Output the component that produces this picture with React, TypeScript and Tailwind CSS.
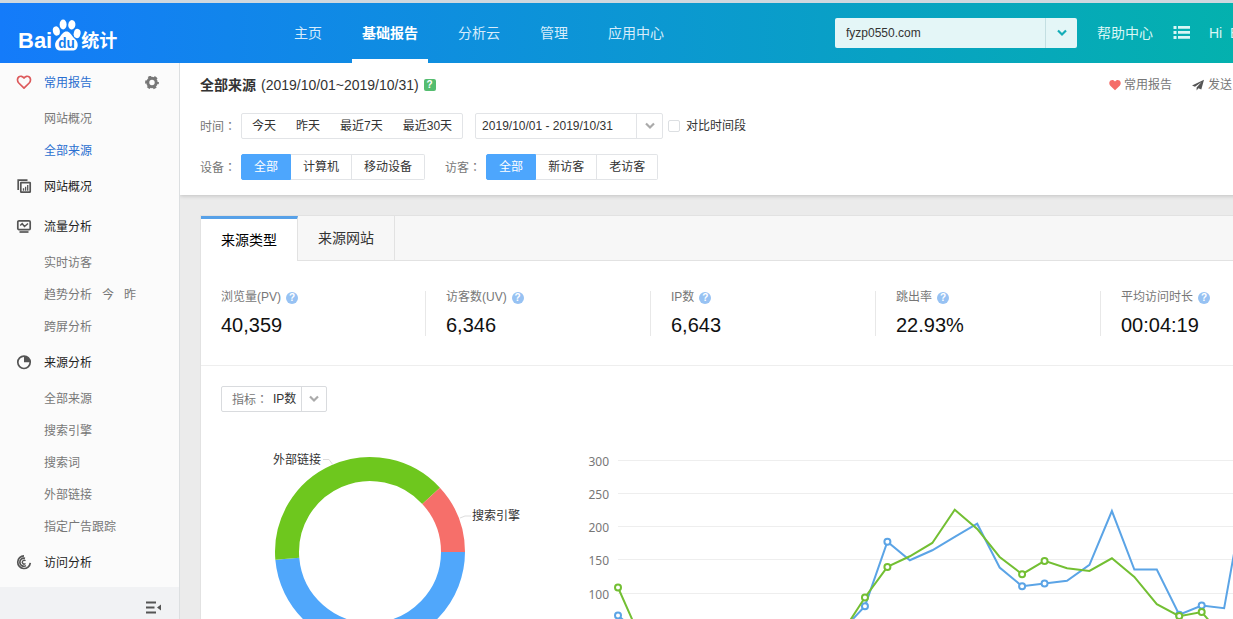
import { useState } from "react";
import type { ReactNode } from "react";
import clsx from "clsx";

interface MenuItem {
  name: string;
  active?: boolean;
  extra?: string[];
}

interface MenuGroup {
  name: string;
  icon: ReactNode;
  active?: boolean;
  items: MenuItem[];
}

const HeartIcon = () => (
  <svg width="16" height="16" viewBox="0 1 16 16" fill="none" stroke="#dd5a5c" strokeWidth="1.7" strokeLinejoin="round">
    <path d="M8 14.200 2.800 9C1 7.100 1.100 4.300 2.700 3c1.700-1.300 4-.8 5.300 1.100C9.300 2.200 11.600 1.700 13.300 3c1.600 1.300 1.700 4.100-.1 6Z" />
  </svg>
);

const OverviewIcon = () => (
  <svg width="16" height="16" viewBox="0 1 16 16" fill="none" stroke="#555" strokeWidth="1.7">
    <path d="M2.200 12V2.200H11.500" />
    <rect x="4.800" y="4.600" width="9.400" height="9.600" rx=".5" />
    <path d="M7.500 12.700V10.200M9.600 12.700V8.700M11.700 12.700V7" strokeWidth="1.300" />
  </svg>
);

const FlowIcon = () => (
  <svg width="16" height="16" viewBox="0 1 16 16" fill="none" stroke="#555" strokeWidth="1.7">
    <rect x="1.800" y="2.800" width="12.400" height="8.800" rx="1.200" />
    <path d="m4.200 7.500 2-1.800 2.300 2.800 3.500-3" strokeWidth="1.500" />
    <path d="M3.500 14h9" />
  </svg>
);

const SourceIcon = () => (
  <svg width="16" height="16" viewBox="0 1 16 16" fill="none">
    <circle cx="8" cy="8.300" r="6.200" stroke="#555" strokeWidth="1.700" />
    <path d="M8 8.300V2.100A6.200 6.200 0 0 1 14.200 8.300Z" fill="#555" />
  </svg>
);

const VisitIcon = () => (
  <svg width="16" height="16" viewBox="0 1 16 16" fill="none" stroke="#555" strokeWidth="1.700">
    <path d="M8 1.900a6.300 6.300 0 1 0 6.300 7" />
    <path d="M9 4.400a4 4 0 1 0 1 7.200" />
    <path d="M9.500 6.800a1.900 1.900 0 1 0 0 2.800" strokeWidth="1.400" />
  </svg>
);

const menu: MenuGroup[] = [
  { name: "常用报告", icon: <HeartIcon />, active: true, items: [{ name: "网站概况" }, { name: "全部来源", active: true }] },
  { name: "网站概况", icon: <OverviewIcon />, items: [] },
  { name: "流量分析", icon: <FlowIcon />, items: [{ name: "实时访客" }, { name: "趋势分析", extra: ["今", "昨"] }, { name: "跨屏分析" }] },
  {
    name: "来源分析",
    icon: <SourceIcon />,
    items: [{ name: "全部来源" }, { name: "搜索引擎" }, { name: "搜索词" }, { name: "外部链接" }, { name: "指定广告跟踪" }],
  },
  { name: "访问分析", icon: <VisitIcon />, items: [] },
];

const navItems = ["主页", "基础报告", "分析云", "管理", "应用中心"];

const metrics = [
  { name: "浏览量(PV)", value: "40,359" },
  { name: "访客数(UV)", value: "6,346" },
  { name: "IP数", value: "6,643" },
  { name: "跳出率", value: "22.93%" },
  { name: "平均访问时长", value: "00:04:19" },
];

// One value per day of the month
const blueData = [67, 38, 30, 28, 25, 26, 30, 28, 32, 35, 45, 81, 178, 150, 165, 185, 205, 139, 111, 115, 119, 143, 224, 136, 136, 68, 82, 78, 265, 180, 150];
const greenData = [109, 33, 28, 25, 24, 26, 28, 30, 30, 34, 42, 94, 140, 156, 176, 226, 197, 155, 129, 149, 138, 134, 153, 125, 84, 66, 72, 33, 60, 90, 80];
const markedDays = [0, 11, 12, 18, 19, 25, 26];

const chartX = (i: number) => 48 + i * 22.45;
const chartY = (v: number) => 248 - v * 0.665;

const Chevron = ({ color }: { color: string }) => (
  <svg width="10" height="8" viewBox="0 0 10 8" fill="none" stroke={color} strokeWidth="2.200">
    <path d="m1 1.500 4 4 4-4" />
  </svg>
);

// The TC face centres the full-width colon in its cell
const Colon = () => <span className="font-['Noto_Sans_CJK_TC',sans-serif]">：</span>;

const HelpDot = ({ name }: { name: string }) => (
  <button
    aria-label={`${name} 说明`}
    className="mt-px flex size-3 items-center justify-center rounded-full bg-[#97c2f3] text-[10px] leading-3 font-bold text-white"
  >
    ?
  </button>
);

function Logo() {
  return (
    <a href="#" className="flex w-[266px] items-end pt-1 pl-[18px] text-white">
      <span className="text-[22px] leading-6 font-bold">Bai</span>
      <svg width="29" height="34" viewBox="0 0 30 34" preserveAspectRatio="none" fill="#fff" className="mb-[2px]">
        <ellipse cx="4.500" cy="14" rx="3.600" ry="4.700" transform="rotate(-12 4.500 14)" />
        <ellipse cx="11.500" cy="7.500" rx="3.600" ry="4.900" />
        <ellipse cx="20.500" cy="7.800" rx="3.700" ry="4.700" transform="rotate(10 20.500 7.800)" />
        <ellipse cx="26" cy="16.500" rx="3.500" ry="4.700" transform="rotate(12 26 16.500)" />
        <path d="M15 14.500c3.200 0 4.500 2.800 6.600 5.200 2.200 2.400 5 4.300 5 8.200 0 3.500-2.200 5.700-5.400 5.700H8.800c-3.200 0-5.600-2.200-5.600-5.700 0-3.800 3-5.800 5.100-8.200 2-2.400 3.500-5.200 6.700-5.200Z" />
        <text x="15" y="31" textAnchor="middle" fontSize="14" fontWeight="bold" fill="#127dee">du</text>
      </svg>
      <span className="text-[18px] leading-6 font-bold">统计</span>
    </a>
  );
}

function Header() {
  return (
    <header className="flex h-[63px] shrink-0 items-stretch border-t-3 border-[#cfd8df] bg-linear-to-r/srgb from-[#147bfa] to-[#02b6a7] text-sm">
      <div className="flex items-center">
        <Logo />
      </div>
      <nav className="ml-[18px] flex gap-5">
        {navItems.map(item => (
          <a
            key={item}
            href="#"
            className={clsx(
              "flex items-center border-y-4 border-transparent px-[10px]",
              item === "基础报告" ? "border-b-white font-bold text-white" : "text-[#d6ecfb]"
            )}
          >
            {item}
          </a>
        ))}
      </nav>
      <div className="ml-[161px] flex items-center text-[#d9f6f5]">
        <div className="relative flex h-[30px] w-[242px] overflow-hidden rounded-xs bg-[#e4f6f7] text-xs text-[#333]">
          <select aria-label="网站" className="w-full appearance-none pl-[11px] outline-none">
            <option>fyzp0550.com</option>
          </select>
          <span className="pointer-events-none absolute inset-y-0 right-0 flex w-8 items-center justify-center border-l border-[#c3dfe2]">
            <Chevron color="#13adb8" />
          </span>
        </div>
        <a href="#" className="ml-5">帮助中心</a>
        <button aria-label="列表" className="ml-5">
          <svg width="18" height="16" viewBox="0 0 18 16" fill="currentColor">
            <path d="M.5 1h3v3h-3zM5 1h12v2.800H5zM.5 6h3v3h-3zM5 6h12v2.800H5zM.5 11h3v3h-3zM5 11h12v2.800H5z" />
          </svg>
        </button>
        <span className="ml-[18px] whitespace-pre">Hi  B</span>
      </div>
    </header>
  );
}

function Sidebar() {
  return (
    <aside className="flex w-[180px] shrink-0 flex-col border-r border-[#dcdfe1] bg-[#fbfbfb] text-xs">
      <nav className="min-h-0 flex-1 overflow-hidden">
        {menu.map((group, i) => (
          <div key={i}>
            <div className="flex h-10 items-center pr-5 pl-4">
              {group.icon}
              <a href="#" className={clsx("ml-3", group.active ? "text-[#2a6fd0]" : "text-[#222]")}>
                {group.name}
              </a>
              {group.active && (
                <button aria-label="设置" className="ml-auto">
                  <svg width="14" height="14" viewBox="0 .5 14 14" fill="none" stroke="#777">
                    <circle cx="7" cy="7" r="4.200" strokeWidth="3" />
                    <circle cx="7" cy="7" r="5.900" strokeWidth="2" strokeDasharray="3.090 3.090" strokeDashoffset="1.500" />
                  </svg>
                </button>
              )}
            </div>
            {group.items.map(item => (
              <div key={item.name} className="flex h-8 items-center gap-[10px] pl-11 text-[#777]">
                <a href="#" className={clsx(item.active && "text-[#2a6fd0]")}>{item.name}</a>
                {item.extra?.map(text => (
                  <a key={text} href="#">{text}</a>
                ))}
              </div>
            ))}
          </div>
        ))}
      </nav>
      <div className="flex h-8 items-center justify-end bg-[#f1f2f4] pt-2 pr-[18px]">
        <button aria-label="收起">
          <svg width="15" height="13" viewBox="0 0 15 13" fill="#555">
            <path d="M0 .5h10v2H0zM0 5.500h8.500v2H0zM0 10.500h10v2H0zM15 3.500v6l-4-3z" />
          </svg>
        </button>
      </div>
    </aside>
  );
}

function ButtonGroup({ options }: { options: string[] }) {
  const [value, setValue] = useState(options[0]);

  return (
    <div className="ml-[5px] flex h-[26px]">
      {options.map(option => (
        <button
          key={option}
          onClick={() => setValue(option)}
          className={clsx(
            "border-y border-r px-3 first:rounded-l-xs first:border-l last:rounded-r-xs",
            option === value ? "border-[#4da6fd] bg-[#4da6fd] text-white" : "border-[#e2e4e7] text-[#333]"
          )}
        >
          {option}
        </button>
      ))}
    </div>
  );
}

function Filters() {
  return (
    <section className="relative bg-white px-5 pb-[15px] text-xs shadow-[0_1px_4px_rgba(0,0,0,0.18)]">
      <div className="flex h-11 items-center">
        <h1 className="text-sm font-bold text-[#333]">全部来源</h1>
        <span className="ml-[5px] text-sm text-[#333]">(2019/10/01~2019/10/31)</span>
        <button aria-label="帮助" className="ml-[5px] size-3 rounded-xs bg-[#55bd70] text-[10px] leading-3 font-bold text-white">
          ?
        </button>
        <div className="mr-[95px] ml-auto flex items-center text-[#777]">
          <a href="#" className="flex items-center gap-[3px]">
            <svg width="12" height="12" viewBox="0 0 12 12" fill="#f56c68">
              <path d="M6 11.300 1.300 6.800C-.2 5.200 0 2.700 1.500 1.500 3 .4 5 .8 6 2.500 7 .8 9 .4 10.500 1.500c1.500 1.200 1.700 3.700.2 5.300Z" />
            </svg>
            常用报告
          </a>
          <a href="#" className="ml-5 flex items-center gap-1">
            <svg width="12" height="12" viewBox="0 0 12 12" fill="#555">
              <path d="M12 .8 0 6.600l3 1.200L9.500 3 4.600 8.500V11.600L6.400 9.300 9.300 10.600Z" />
            </svg>
            发送
          </a>
        </div>
      </div>
      <div className="mt-[6px] flex items-center text-[#333]">
        <span className="text-[#777]">时间<Colon /></span>
        <div className="ml-[5px] flex h-[26px] rounded-xs border border-[#e2e4e7]">
          {["今天", "昨天", "最近7天", "最近30天"].map(range => (
            <button key={range} className="px-[10px]">{range}</button>
          ))}
        </div>
        <button className="ml-3 flex h-[26px] items-stretch rounded-xs border border-[#e2e4e7]">
          <span className="flex w-[160px] items-center pl-[6px]">2019/10/01 - 2019/10/31</span>
          <span className="flex w-[26px] items-center justify-center border-l border-[#e2e4e7]">
            <Chevron color="#aaa" />
          </span>
        </button>
        <label className="ml-[5px] flex items-center gap-[6px]">
          <input type="checkbox" className="size-3 appearance-none rounded-xs border border-[#dcdfe2] checked:bg-[#4da6fd]" />
          对比时间段
        </label>
      </div>
      <div className="mt-[15px] flex items-center">
        <span className="text-[#777]">设备<Colon /></span>
        <ButtonGroup options={["全部", "计算机", "移动设备"]} />
        <span className="ml-5 text-[#777]">访客<Colon /></span>
        <ButtonGroup options={["全部", "新访客", "老访客"]} />
      </div>
    </section>
  );
}

function SourceDonut() {
  return (
    <svg width="369" height="280" className="shrink-0" fontSize="12" fill="#333">
      <g fill="none" strokeWidth="24">
        <path d="M252 140A83 83 0 0 1 86.300 146.800" stroke="#50a7fb" />
        <path d="M86.300 146.800A83 83 0 0 1 230.100 83.800" stroke="#6ec71e" />
        <path d="M230.100 83.800A83 83 0 0 1 252 140" stroke="#f66f6a" />
      </g>
      <g fill="none" stroke="#ddd">
        <path d="M122 47.500h6l4 5.500" />
        <path d="M259 106l5-2h6" />
      </g>
      <text x="72" y="52">外部链接</text>
      <text x="271" y="108">搜索引擎</text>
    </svg>
  );
}

function TrendChart() {
  const series = [
    { color: "#5ba4e6", data: blueData },
    { color: "#73bf33", data: greenData },
  ];

  return (
    <svg width="740" height="280" className="shrink-0">
      {[300, 250, 200, 150, 100, 50, 0].map(v => (
        <g key={v}>
          <path d={`M48 ${Math.round(chartY(v)) - 0.5}H735`} stroke="#eeeeee" />
          <text x="39" y={Math.round(chartY(v)) + 5} textAnchor="end" fontSize="12" fill="#777" className="font-['Noto_Sans',sans-serif]">
            {v}
          </text>
        </g>
      ))}
      {series.map(({ color, data }) => (
        <g key={color} stroke={color} strokeWidth="2">
          <polyline fill="none" points={data.map((v, i) => `${chartX(i)},${chartY(v)}`).join(" ")} />
          {markedDays.map(i => (
            <circle key={i} cx={chartX(i)} cy={chartY(data[i])} r="3" fill="#fff" />
          ))}
        </g>
      ))}
    </svg>
  );
}

export default function App() {
  const [tab, setTab] = useState("来源类型");

  return (
    <div className="h-screen overflow-hidden font-['Liberation_Sans','Noto_Sans_CJK_SC',sans-serif]">
      <div className="flex h-full min-w-[1347px] flex-col">
        <Header />
        <div className="flex min-h-0 flex-1">
          <Sidebar />
          <main className="min-w-0 flex-1 overflow-hidden bg-[#ebebeb]">
            <Filters />
            <section className="mx-5 mt-5 border border-[#e2e2e2] bg-white">
              <div className="flex h-[45px] bg-[#f7f7f7] text-sm">
                {["来源类型", "来源网站"].map(name => (
                  <button
                    key={name}
                    onClick={() => setTab(name)}
                    className={clsx(
                      "border-r border-r-[#e2e2e2] px-5",
                      name === tab ? "border-t-3 border-t-[#57a1e8] bg-white text-black" : "border-b border-b-[#e2e2e2] text-[#333]"
                    )}
                  >
                    {name}
                  </button>
                ))}
                <div className="flex-1 border-b border-[#e2e2e2]" />
              </div>
              <div className="flex border-b border-[#eeeeee] pt-[30px] pb-[29px]">
                {metrics.map(metric => (
                  <div key={metric.name} className="h-[45px] flex-1 basis-0 border-r border-[#e8e8e8] pl-5 last:border-transparent">
                    <div className="flex h-3 items-center gap-[5px] text-xs text-[#777]">
                      {metric.name}
                      <HelpDot name={metric.name} />
                    </div>
                    <div className="mt-2 text-xl leading-7 text-[#111]">{metric.value}</div>
                  </div>
                ))}
              </div>
              <div className="flex px-5 pt-5 text-xs">
                <div className="relative flex h-[26px] items-center rounded-xs border border-[#d9dbde]">
                  <label htmlFor="indicator" className="pl-[10px] text-[#777]">指标<Colon /></label>
                  <select id="indicator" className="h-full appearance-none pr-[29px] pl-[5px] text-[#333] outline-none">
                    <option>IP数</option>
                  </select>
                  <span className="pointer-events-none absolute inset-y-0 right-0 flex w-[25px] items-center justify-center border-l border-[#d9dbde]">
                    <Chevron color="#aaa" />
                  </span>
                </div>
              </div>
              <div className="flex">
                <SourceDonut />
                <TrendChart />
              </div>
            </section>
          </main>
        </div>
      </div>
    </div>
  );
}
